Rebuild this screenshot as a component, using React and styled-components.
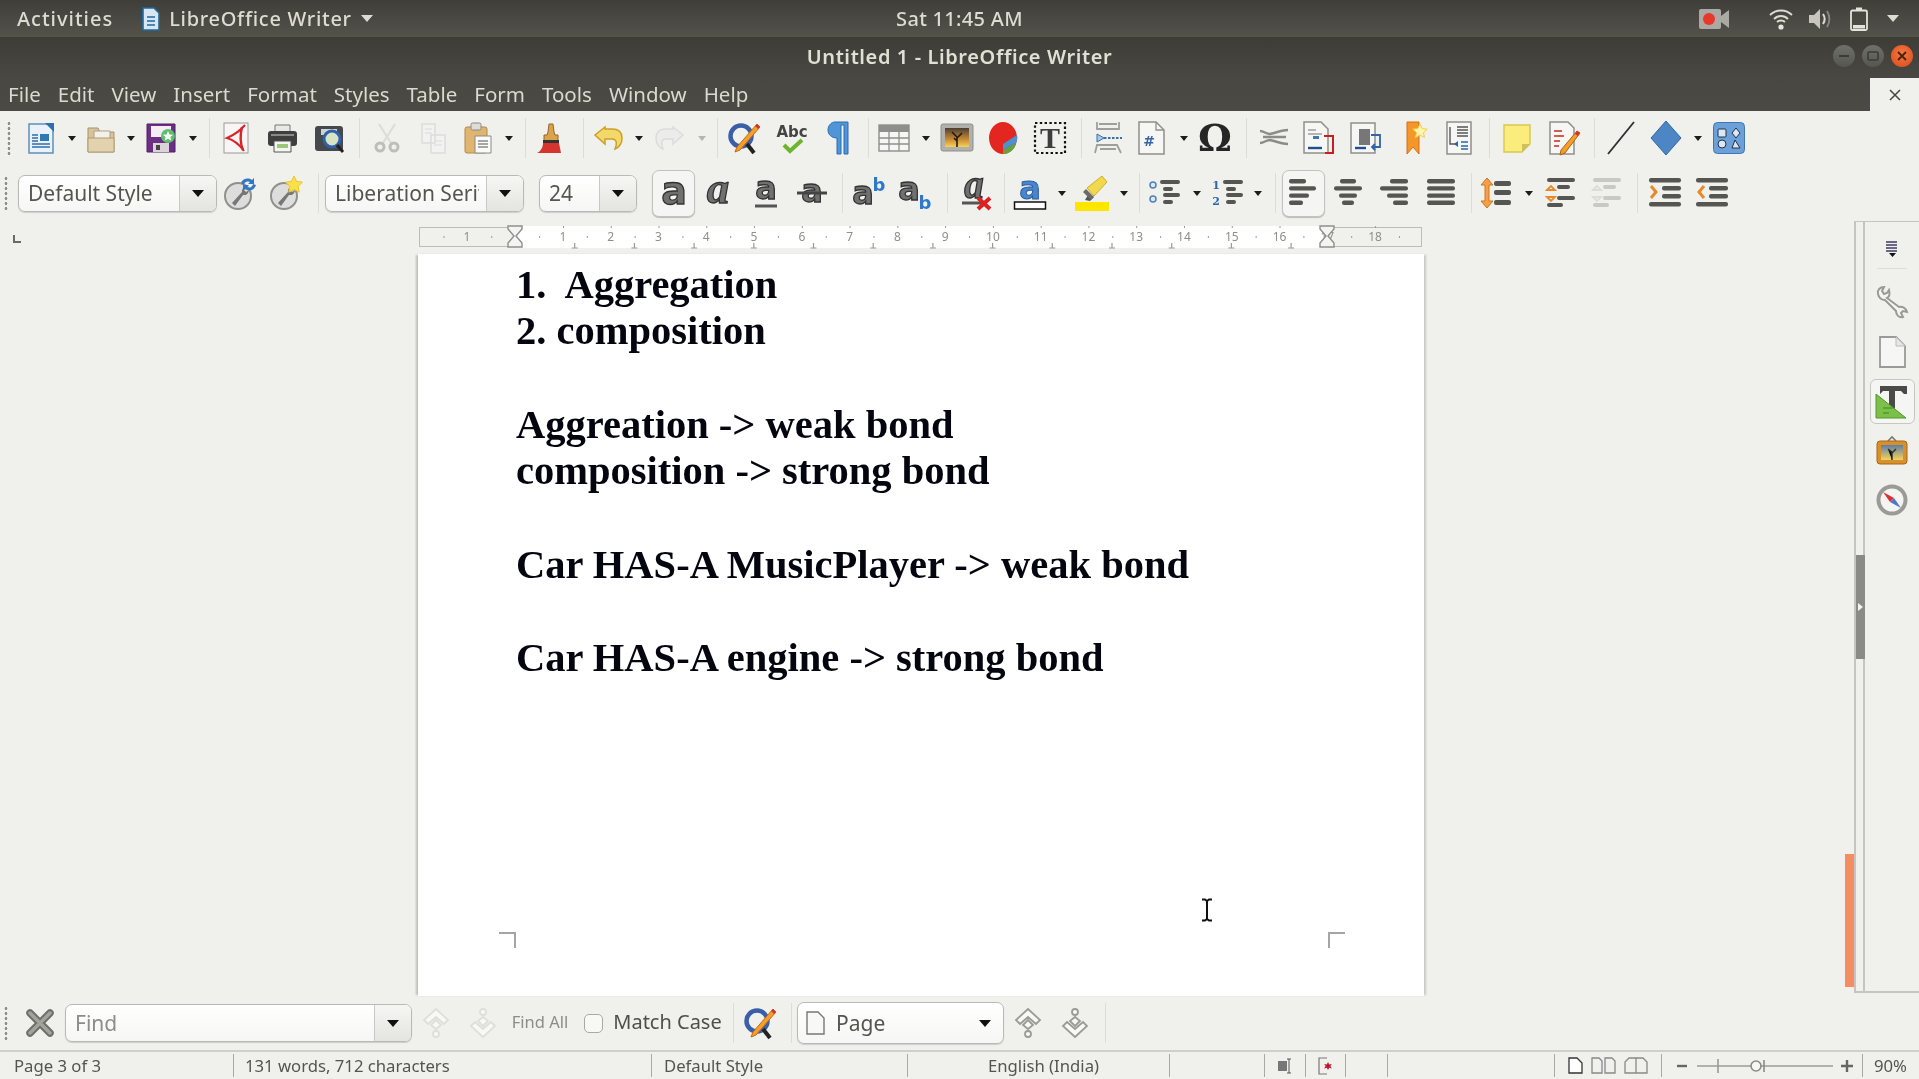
import React from 'react';
import styled, { createGlobalStyle } from 'styled-components';

const UI = `"Noto Sans", "Open Sans", sans-serif`;

const Global = createGlobalStyle`
  html, body { margin: 0; padding: 0; background: #f0f0ed; overflow: hidden; }
  * { box-sizing: border-box; }
`;

const Screen = styled.div`
  width: 1919px; height: 1079px; display: flex; flex-direction: column; overflow: hidden;
  background: #f0f0ed; font-family: ${UI}; filter: blur(0.45px);
`;
const TopBar = styled.header`
  height: 37px; flex: none; display: grid; grid-template-columns: 1fr auto 1fr; align-items: center;
  background: linear-gradient(#3f3e39, #53524b); color: #dedbd0; font-size: 20px; font-weight: 500;
`;
const TopLeft = styled.div`display: flex; align-items: center; padding-left: 17px;`;
const Activities = styled.span`letter-spacing: 1px;`;
const AppName = styled.div`display: flex; align-items: center; gap: 9px; margin-left: 29px; letter-spacing: .7px;`;
const Clock = styled.div`letter-spacing: .3px;`;
const TopRight = styled.div`display: flex; align-items: center; justify-content: flex-end; padding-right: 20px;`;
const TrayItem = styled.span`display: flex; margin-left: ${p => p.$ml}px;`;
const WhiteCaret = styled.span`
  display: block; width: 0; height: 0; border: 6px solid transparent; border-top: 7px solid ${p => p.$c || '#dedbd0'}; border-bottom: 0;
`;
const TitleBar = styled.div`
  height: 38px; flex: none; display: grid; grid-template-columns: 1fr auto 1fr; align-items: center;
  background: linear-gradient(#3d3c37, #484742); color: #e2dfd4; font-size: 20px; font-weight: 600; letter-spacing: .6px;
`;
const TitleText = styled.span`grid-column: 2;`;
const WinButtons = styled.div`grid-column: 3; display: flex; justify-content: flex-end; gap: 7px; padding-right: 6px;`;
const WinBtn = styled.span`
  width: 22px; height: 22px; border-radius: 50%; display: flex; align-items: center; justify-content: center;
  background: ${p => p.$close ? 'radial-gradient(circle at 50% 40%, #f47a3e, #d9481c)' : 'linear-gradient(#70706a, #565650)'};
`;
const MenuBar = styled.nav`
  height: 36px; flex: none; display: flex; align-items: center; padding: 2px 0 0 8px; gap: 17px;
  background: linear-gradient(#484742, #4c4a44); color: #dcd9ce; font-size: 20.5px; position: relative;
`;
const CloseTab = styled.div`
  position: absolute; right: 0; bottom: 0; width: 49px; height: 33px; background: #f0f0ed;
  display: flex; align-items: center; justify-content: center;
`;
const Bar = styled.div`
  height: ${p => p.$h}px; display: flex; align-items: center; flex: none; background: #f0f0ed; ${p => p.$line && 'border-bottom: 2px solid #cfcfcb;'}
`;
const Slot = styled.div`
  flex: none; display: flex; align-items: center; justify-content: center; height: ${p => p.$h || 34}px;
  width: ${p => p.$w}px; margin-left: ${p => p.$ml}px;
  ${p => p.$active && 'height: 47px; border: 1px solid #c2c2be; border-radius: 7px; background: #f5f5f3; box-shadow: 0 1px 1px #bbb;'}
`;
const Sep = styled.div`width: 1px; height: 40px; background: #dcdcd8;`;
const Grip = styled.div`
  width: 4px; height: 34px; background-image: radial-gradient(circle, #8f8f8b 1.3px, transparent 1.6px); background-size: 4px 5px;
`;
const Caret = styled.span`
  display: block; width: 0; height: 0; border: 4px solid transparent; border-top: 5px solid ${p => p.$off ? '#b5b5b2' : '#1c1c1c'}; border-bottom: 0;
`;
const ComboBox = styled.div`
  width: 100%; height: ${p => p.$h || 37}px; display: flex; border: 1px solid #b9b9b5; border-radius: 7px; overflow: hidden;
  box-shadow: 0 1px 1px #ccc; background: linear-gradient(#fff, #f6f6f4); color: #55554f; font-size: 21px;
`;
const ComboText = styled.div`
  flex: 1; min-width: 0; padding-left: ${p => p.$pad ?? 9}px; display: flex; align-items: center; gap: 11px; white-space: nowrap; overflow: hidden;
`;
const ComboClip = styled.span`display: block; overflow: hidden; margin-right: 7px;`;
const ComboBtn = styled.div`
  flex: none; width: ${p => p.$w}px; display: flex; align-items: center; justify-content: center;
  ${p => !p.$flat && 'border-left: 1px solid #c8c8c4; background: linear-gradient(#f6f6f4, #e4e4e0);'}
`;
const BigCaret = styled.span`
  display: block; width: 0; height: 0; border: 6px solid transparent; border-top: 7px solid #111; border-bottom: 0;
`;
const Main = styled.div`flex: 1; min-height: 0; display: flex;`;
const LeftCol = styled.div`width: 1854px; flex: none; display: flex; flex-direction: column;`;
const RulerRow = styled.div`height: 33px; flex: none; display: flex; align-items: flex-end; padding: 0 0 5px 13px;`;
const TabMark = styled.span`
  width: 8px; height: 8px; border-left: 2px solid #6a6a66; border-bottom: 2px solid #6a6a66; margin-bottom: 6px; margin-right: 398px;
`;
const DocRow = styled.div`flex: 1; min-height: 0; display: flex; padding-left: 418px;`;
const Sheet = styled.main`
  width: 1006px; position: relative; background: #fff; display: flex; flex-direction: column; padding-top: 7.5px;
  box-shadow: -3px 0 2px -1px #bdbdba, 3px 0 2px -1px #c8c8c5;
`;
const Line = styled.p`
  margin: 0 0 0 98px; height: 46.7px; line-height: 46.7px; white-space: pre;
  font-family: "Liberation Serif", serif; font-weight: 700; font-size: 40.5px; color: #050510;
`;
const CornerRow = styled.div`margin-top: auto; margin-bottom: 48px; padding: 0 79px 0 81px; display: flex; justify-content: space-between;`;
const Corner = styled.span`
  width: 17px; height: 16px; border-top: 2px solid #a5a5a3;
  ${p => p.$side === 'right' ? 'border-right: 2px solid #a5a5a3;' : 'border-left: 2px solid #a5a5a3;'}
`;
const IBeam = styled.svg`position: absolute; left: 783px; top: 644px;`;
const Track = styled.div`width: 10px; margin-left: auto; margin-right: -1px; display: flex; flex-direction: column; justify-content: flex-end; padding-bottom: 9px;`;
const Thumb = styled.div`height: 133px; background: #f48e5e;`;
const SideBar = styled.aside`
  width: 65px; height: 772px; flex: none; display: flex; border: 1px solid #c4c4c0; border-right: 0; border-left-width: 2px; position: relative; border-bottom-width: 2px;
`;
const SideHandle = styled.div`
  width: 9px; flex: none; border-right: 2px solid #c4c4c0; display: flex; align-items: center;
`;
const HandleGrip = styled.div`
  width: 9px; height: 104px; background: #8a8a87; display: flex; align-items: center; justify-content: center; flex: none;
`;
const HandleArrow = styled.span`
  display: block; width: 0; height: 0; border: 4px solid transparent; border-left: 5px solid #f4f4f2; border-right: 0;
`;
const SideIcons = styled.div`flex: 1; display: flex; flex-direction: column; align-items: center; padding-top: 18px;`;
const SideBtn = styled.div`
  width: 45px; height: 45px; margin-top: ${p => p.$mt}px; flex: none; display: flex; align-items: center; justify-content: center; border-radius: 6px;
  ${p => p.$active && 'border: 1px solid #c6c6c2; background: #f5f5f3;'}
`;
const SideRule = styled.div`width: 30px; height: 1px; background: #dcdcd8; margin-top: 10px;`;
const FindLabel = styled.span`
  font-size: ${p => p.$size || 20}px; color: ${p => p.$off ? '#8c8c88' : '#4f4f4a'}; white-space: nowrap; margin-top: ${p => p.$up ? -3 : 0}px;
`;
const CheckBox = styled.span`display: block; width: 19px; height: 19px; border: 1.5px solid #a8a8a4; border-radius: 5px; background: #f8f8f6;`;
const Status = styled.footer`
  height: 27px; flex: none; display: flex; align-items: center; color: #555550; font-size: 16.7px; background: #f0f0ed;
`;
const Cell = styled.div`
  height: 23px; width: ${p => p.$w}px; flex: none; display: flex; align-items: center; gap: ${p => p.$gap || 0}px;
  justify-content: ${p => p.$align || 'flex-start'}; padding-left: ${p => p.$pad ?? 0}px; white-space: nowrap;
  ${p => !p.$first && 'border-left: 1.5px solid #a9a9a5;'}
`;

const S = ({ children, w = 32, h = 32, vb }) => (
  <svg width={w} height={h} viewBox={vb || `0 0 ${w} ${h}`} fill="none" overflow="visible">{children}</svg>
);
const g = { tf: '"DejaVu Sans", sans-serif' };

const NewDoc = () => <S><path d="M4 2h19l5 5v24H4z" fill="#eaf1f8" stroke="#5e8fbe" strokeWidth="1.5"/><path d="M20 1h9v9z" fill="#2f6ea8"/><rect x="15" y="12" width="9" height="7" fill="#2f78b5"/><path d="M7 13h6M7 16h6M7 19h6M7 22h18M7 25h18" stroke="#2f6ea8" strokeWidth="1.6"/></S>;
const OpenIco = () => <S><path d="M3 6h10l2 4h14v20H3z" fill="#d8c39a" stroke="#a99368"/><path d="M9 9h16v9H9z" fill="#f4f1ea" stroke="#a8a090"/><path d="M3 16h26v14H3z" fill="#e3d2ae" stroke="#b09a70"/></S>;
const SaveIco = () => <S><path d="M2 2h28v28H2z" fill="#6d2f86" stroke="#4e2163"/><rect x="6" y="4" width="20" height="11" fill="#f2eef4"/><rect x="8" y="21" width="16" height="9" fill="#d8d4d8"/><rect x="11" y="23" width="4" height="5" fill="#444"/><circle cx="23" cy="14" r="7" fill="#5dc06a"/><path d="M23 9l1.5 3.4 3.5.4-2.6 2.3.8 3.4-3.2-1.8-3.2 1.8.8-3.4-2.6-2.3 3.5-.4z" fill="#fff"/></S>;
const PdfIco = () => <S><rect x="4" y="1" width="24" height="30" fill="#f7f6f4" stroke="#9a9a96"/><path d="M25 3C20 9 14 13 7 16c7 2 12 6 17 13" stroke="#d8232a" strokeWidth="2"/><path d="M22 5c-2 8-2 16 1 23" stroke="#d8232a" strokeWidth="2.4"/></S>;
const PrintIco = () => <S><path d="M9 3h15v7H9z" fill="#e8e8e6" stroke="#777"/><rect x="2" y="9" width="29" height="15" rx="3" fill="#3f3f3f"/><rect x="5" y="12" width="23" height="2" fill="#8a8a88"/><path d="M8 19h17v11H8z" fill="#f5f5f2" stroke="#555"/><rect x="11" y="22" width="11" height="4" fill="#9bc77a"/></S>;
const PreviewIco = () => <S><rect x="2" y="4" width="28" height="25" rx="3" fill="#45494d" /><rect x="8" y="7" width="16" height="6" fill="#cfd2d4"/><circle cx="19" cy="17" r="8" fill="#d6e3c4" stroke="#2f60a8" strokeWidth="3"/><path d="M24 23l6 7" stroke="#222" strokeWidth="3"/></S>;
const CutIco = () => <S><path d="M8 2l12 19M24 2L12 21" stroke="#dcdcda" strokeWidth="2.2"/><circle cx="9" cy="25" r="4" stroke="#bdbdbb" strokeWidth="3"/><circle cx="23" cy="25" r="4" stroke="#bdbdbb" strokeWidth="3"/></S>;
const CopyIco = () => <S><path d="M5 2h13v19H5zM14 13h14v18H14z" fill="#f2f2f0" stroke="#dcdcda" strokeWidth="1.5"/><path d="M8 7h7M8 11h7M17 19h8M17 23h8" stroke="#e2e2e0" strokeWidth="1.5"/></S>;
const PasteIco = () => <S><rect x="3" y="5" width="22" height="26" rx="2" fill="#e0b56f" stroke="#b08a4c"/><rect x="9" y="1" width="10" height="7" rx="1.5" fill="#dedcd8" stroke="#888"/><path d="M13 14h16v17H13z" fill="#fafaf8" stroke="#8a8a86"/><path d="M16 19h10M16 22h10M16 25h10" stroke="#8a8a86" strokeWidth="1.4"/></S>;
const BrushIco = () => <S><path d="M14 2h4l1 8 1 3h3v6H9v-6h3l1-3z" fill="#d9a24c" stroke="#94672a"/><rect x="8" y="18" width="16" height="3" fill="#333"/><path d="M8 21h16l2 10H2c4-2 6-6 6-10z" fill="#d6342e"/></S>;
const UndoIco = () => <S><path d="M12 5L2 13l10 9v-5h7c4 0 5 3 4 7l-1 3c5-2 7-6 7-11 0-6-4-9-10-9h-7z" fill="#f3d96c" stroke="#c9a02a" strokeWidth="1.5"/></S>;
const RedoIco = () => <S><g transform="translate(32 0) scale(-1 1)"><path d="M12 5L2 13l10 9v-5h7c4 0 5 3 4 7l-1 3c5-2 7-6 7-11 0-6-4-9-10-9h-7z" fill="#ececea" stroke="#dcdcda" strokeWidth="1.5"/></g></S>;
const FindIco = () => <S w={36} h={36}><circle cx="15" cy="16" r="10.5" stroke="#3a5fa8" strokeWidth="4.5"/><path d="M21 24l7 9" stroke="#222" strokeWidth="4"/><path d="M31 4l3 3L14 30l-5 2 2-5z" fill="#f2a028" stroke="#c4681a"/><path d="M31 4l3 3-2 2-3-3z" fill="#d6342e"/></S>;
const AbcIco = () => <S w={36} h={36}><text x="18" y="17" textAnchor="middle" fontFamily={g.tf} fontSize="15" fontWeight="700" fill="#444">Abc</text><path d="M10 25l6 6 12-11" stroke="#6cb52c" strokeWidth="4"/></S>;
const ParaIco = () => <S w={24} h={36}><path d="M8 2h13v32h-4V5h-3v29h-4V18C4 18 1 14 1 10s3-8 7-8z" fill="#4f95d8" stroke="#2a6cb0"/></S>;
const TableIco = () => <S><rect x="1" y="3" width="30" height="26" fill="#f6f6f4" stroke="#8e8e8a" strokeWidth="1.4"/><rect x="1" y="3" width="30" height="7" fill="#8e8e8a"/><path d="M1 16h30M1 22h30M11 10v19M21 10v19" stroke="#8e8e8a" strokeWidth="1.3"/></S>;
const ImageIco = () => <S w={34} h={34}><rect x="1" y="3" width="32" height="27" rx="2" fill="#b0b0ac" stroke="#8e8e8a"/><defs><linearGradient id="sky" x1="0" y1="0" x2="0" y2="1"><stop offset="0" stopColor="#4c3f33"/><stop offset=".6" stopColor="#c98a34"/><stop offset="1" stopColor="#f6d35a"/></linearGradient></defs><rect x="5" y="7" width="24" height="19" fill="url(#sky)"/><path d="M17 26V16l-5-5M17 17l5-5M17 20l-3-3" stroke="#231a12" strokeWidth="1.6"/></S>;
const ChartIco = () => <S w={32} h={36}><ellipse cx="16" cy="18" rx="14" ry="16" fill="#e3261f"/><path d="M16 30l13-7c-1 6-6 11-13 11z" fill="#62a53b"/><path d="M16 24l14-9c1 3 0 6-1 8l-13 7z" fill="#4d92d0"/></S>;
const TextBoxIco = () => <S w={34} h={36}><rect x="2" y="3" width="30" height="30" stroke="#111" strokeWidth="2.2" strokeDasharray="2.4 2.4"/><text x="17" y="28" textAnchor="middle" fontFamily='"Liberation Serif", serif' fontWeight="700" fontSize="30" fill="#3e3e3e">T</text></S>;
const BreakIco = () => <S w={36} h={36}><path d="M8 2v7h22V2M10 4h18" stroke="#9e9e9a" strokeWidth="1.8"/><path d="M8 14l0 8 7-4z" fill="#a9cbe8" stroke="#3a6ea8"/><path d="M15 18h18" stroke="#3a6ea8" strokeWidth="2" strokeDasharray="2.5 1.5"/><path d="M6 33l2-8h20l4 8M11 29h16" stroke="#9e9e9a" strokeWidth="1.8"/></S>;
const FieldIco = () => <S w={30} h={36}><path d="M3 2h17l8 8v24H3z" fill="#f6f6f4" stroke="#8e8e8a" strokeWidth="1.5"/><path d="M20 2v8h8" stroke="#8e8e8a" strokeWidth="1.3"/><text x="13" y="26" textAnchor="middle" fontFamily={g.tf} fontSize="14" fontWeight="700" fill="#37659f">#</text></S>;
const OmegaIco = () => <S w={34} h={36}><text x="17" y="31" textAnchor="middle" fontFamily='"DejaVu Serif", serif' fontSize="38" fontWeight="700" fill="#262626">Ω</text></S>;
const LinkIco = () => <S><path d="M2 9c4 0 6 3 10 3l4-1c3-1 9-3 14-3M2 21c4 0 6-3 10-3l4 1c3 1 9 3 14 3M5 15h23" stroke="#8b8b87" strokeWidth="2.4"/></S>;
const DocArrow = ({ c }) => <S w={34} h={36}><path d="M2 2h17l7 7v24H2z" fill="#f6f6f4" stroke="#8e8e8a" strokeWidth="1.5"/><path d="M6 10h8M6 14h14" stroke="#a0a0a0" strokeWidth="1.4"/><rect x="11" y="16" width="6" height="3" fill="#3a78b8"/><path d="M6 28h14" stroke="#1f4f8e" strokeWidth="2.4"/><path d="M22 16h9v17h-8" stroke={c} strokeWidth="2"/></S>;
const EndIco = () => <S w={34} h={34}><rect x="2" y="2" width="24" height="30" fill="#f6f6f4" stroke="#8e8e8a" strokeWidth="1.5"/><rect x="10" y="8" width="11" height="16" fill="#777"/><path d="M6 27h11" stroke="#1f4f8e" strokeWidth="2.4"/><path d="M22 14h9v12h-8M26 23l-3 3 3 3" stroke="#2f65a8" strokeWidth="1.8"/></S>;
const MarkIco = () => <S w={28} h={36}><path d="M5 2h12v32l-6-7-6 7z" fill="#f4962a" stroke="#d86f12"/><path d="M18 4l2.2 4.6 5 .6-3.7 3.4 1 5-4.500-2.500-4.500 2.500 1-5-3.700-3.400 5-.6z" fill="#fff4b0" stroke="#f4d040"/></S>;
const XrefIco = () => <S w={30} h={36}><rect x="3" y="2" width="24" height="32" fill="#f6f6f4" stroke="#8e8e8a" strokeWidth="1.5"/><path d="M13 7h11M13 10h11M13 13h11M13 16h11M6 7v17h6" stroke="#555" strokeWidth="1.4"/><path d="M10 24l4-3v6z" fill="#2f65a8"/><path d="M17 22h7M17 26h7M17 29h7" stroke="#2f65a8" strokeWidth="1.5"/></S>;
const NoteIco = () => <S><path d="M3 3h26v19l-8 8H3z" fill="#fbec7e" stroke="#d8c74f" strokeWidth="1.4"/><path d="M21 30v-8h8z" fill="#cfc05a"/></S>;
const TrackIco = () => <S w={36} h={36}><path d="M4 2h18l6 6v26H4z" fill="#f6f6f4" stroke="#8e8e8a" strokeWidth="1.5"/><path d="M8 11h8M8 16h10M8 21h6M8 26h5" stroke="#d65a50" strokeWidth="1.8"/><path d="M31 11l3 2-15 20-5 2 1-5z" fill="#f2a028" stroke="#a86020"/><path d="M31 11l3 2-2 3-3-2z" fill="#d6342e"/></S>;
const LineIco = () => <S w={28} h={34}><path d="M1 33L27 1" stroke="#2f2f2f" strokeWidth="1.8"/></S>;
const Diamond = () => <S w={32} h={36}><path d="M16 1l15 17-15 17L1 18z" fill="#4d86c5" stroke="#2d66a8"/></S>;
const ShapesIco = () => <S w={32} h={32}><rect x="0.5" y="0.5" width="31" height="31" rx="4" fill="#6d9fd8" stroke="#3e76b8"/><rect x="5" y="7" width="8" height="8" rx="1" fill="#dbe7f5" stroke="#234"/><path d="M23 6l4 5-4 5-4-5z" fill="#dbe7f5" stroke="#234"/><circle cx="9" cy="22" r="4" fill="#dbe7f5" stroke="#234"/><path d="M19 26l3-8 5 8z" fill="#dbe7f5" stroke="#234"/></S>;
const Wrench = () => <><circle cx="15" cy="21" r="13" fill="#ddd" stroke="#8f8f8b" strokeWidth="2"/><path d="M9 28l10-11a4 4 0 0 1 4-5l-2 3 2 2 3-2a5 5 0 0 1-6 5L12 31z" fill="#777"/></>;
const Style1 = () => <S w={36} h={36}><Wrench /><path d="M18 8a7 7 0 0 1 11-3l2-2v6h-6l2-2a4 4 0 0 0-6 3zM33 10a7 7 0 0 1-11 4l-2 2v-6h6l-2 2a4 4 0 0 0 6-3z" fill="#2f78c8"/></S>;
const Style2 = () => <S w={36} h={36}><Wrench /><path d="M25 1l2.600 5.400 5.900.8-4.300 4.100 1 5.900-5.200-2.800-5.200 2.800 1-5.900-4.300-4.100 5.900-.8z" fill="#fbe04a" stroke="#e8c82c"/></S>;

const Letter = ({ ch = 'a', children, italic, x = 15, y = 26, size = 30, w = 32, h = 34 }) => (
  <S w={w} h={h}>
    <text x={x} y={y} textAnchor="middle" fontFamily={italic ? '"Liberation Serif", serif' : g.tf} fontSize={italic ? size * 1.5 : size} fontWeight="700" fontStyle={italic ? 'italic' : 'normal'} fill="#707070" stroke="#333" strokeWidth="1.3">{ch}</text>
    {children}
  </S>
);
const BoldIco = () => <Letter size={38} y={28} x={16} />;
const ItalicIco = () => <Letter italic y={27} x={14} />;
const UnderIco = () => <Letter y={23} size={32}><path d="M4 30h22" stroke="#555" strokeWidth="3"/></Letter>;
const StrikeIco = () => <Letter y={26} size={32} w={34} x={17}><path d="M2 17h30" stroke="#444" strokeWidth="3"/></Letter>;
const SupIco = () => <Letter x={11} y={28} w={34} size={32}><text x="27" y="15" textAnchor="middle" fontFamily={g.tf} fontSize="18" fontWeight="700" fill="#2f78c8">b</text></Letter>;
const SubIco = () => <Letter x={11} y={24} w={34} size={32}><text x="27" y="33" textAnchor="middle" fontFamily={g.tf} fontSize="18" fontWeight="700" fill="#2f78c8">b</text></Letter>;
const ClearIco = () => <Letter italic y={23} size={26} w={34} h={36} x={14}><path d="M2 28h20" stroke="#555" strokeWidth="3"/><path d="M18 23l12 11M30 23L18 34" stroke="#e02020" strokeWidth="4"/></Letter>;
const ColorIco = () => <S w={34} h={36}><text x="17" y="24" textAnchor="middle" fontFamily={g.tf} fontSize="32" fontWeight="700" fill="#4a86cc" stroke="#2a5ea8">a</text><rect x="1.5" y="27" width="31" height="7" fill="#fff" stroke="#111" strokeWidth="1.5"/></S>;
const HighIco = () => <S w={36} h={36}><path d="M14 20l-3 5 5 1 4-4z" fill="#555"/><path d="M13 13l7 8 13-14-5-6z" fill="#f2d84c" stroke="#cfae2a"/><path d="M12 14l8 8-3 3-8-8z" fill="#6a6a66"/><rect x="1" y="27" width="34" height="9" fill="#ffe600"/></S>;

const bar = '#555551';
const Bars = ({ rows }) => (
  <svg width="30" height="30" viewBox="0 0 30 30">
    {rows.map(([x, w], i) => <rect key={i} x={x} y={1 + i * 7.2} width={w} height="4.4" rx="2" fill={bar} />)}
  </svg>
);
const ListIco = ({ num }) => (
  <S w={32} h={30}>
    {num ? <>
      <text x="5" y="11" textAnchor="middle" fontFamily='"DejaVu Serif", serif' fontSize="11" fontWeight="700" fill="#2f65a8">1</text>
      <text x="5" y="27" textAnchor="middle" fontFamily='"DejaVu Serif", serif' fontSize="11" fontWeight="700" fill="#2f65a8">2</text>
    </> : <>
      <circle cx="5" cy="7" r="3" fill="#dfe8f2" stroke="#4d82c0" strokeWidth="1.5"/>
      <circle cx="5" cy="21" r="3" fill="#dfe8f2" stroke="#4d82c0" strokeWidth="1.5"/>
    </>}
    {[[12, 20, 2], [15, 10, 9], [15, 17, 15], [15, 10, 22]].map(([x, w, y], i) => <rect key={i} x={x} y={y} width={w} height="4" rx="2" fill={bar} />)}
  </S>
);
const SpaceIco = () => <S w={34} h={34}><path d="M8 2l6 7h-4v16h4l-6 7-6-7h4V9H2z" fill="#f4a04a" stroke="#d07618"/><rect x="15" y="5" width="17" height="5" rx="2" fill={bar}/><rect x="15" y="14" width="17" height="5" rx="2" fill={bar}/><rect x="15" y="24" width="17" height="5" rx="2" fill={bar}/></S>;
const ParaUp = ({ off }) => {
  const c = off ? '#c8c8c5' : bar; const o = off ? '#dcdcd8' : '#e88a26';
  return <S w={30} h={34}><rect x="1" y="2" width="28" height="4" rx="2" fill={c}/><rect x="11" y="9" width="13" height="4" rx="2" fill={c}/><path d="M1 14l4-4 4 4zM1 21l4 4 4-4z" fill="none" stroke={o} strokeWidth="1.8"/><rect x="11" y="20" width="18" height="4" rx="2" fill={c}/><rect x="1" y="27" width="16" height="4" rx="2" fill={c}/></S>;
};
const IndentIco = ({ out }) => <S w={34} h={34}>{[[1, 32, 2], [14, 19, 10], [14, 19, 18], [1, 32, 26]].map(([x, w, y], i) => <rect key={i} x={x} y={y} width={w} height="4.4" rx="2" fill={bar}/>)}<path d={out ? 'M9 10l-5 6 5 6' : 'M3 10l5 6-5 6'} stroke="#e88a26" strokeWidth="3" fill="none"/></S>;

const CloseX = () => <svg width="36" height="36" viewBox="0 0 36 36"><path d="M8 8l20 20M28 8L8 28" stroke="#6f6f6a" strokeWidth="7.5" strokeLinecap="round"/><path d="M8 8l20 20M28 8L8 28" stroke="#a3a39e" strokeWidth="3.5" strokeLinecap="round"/></svg>;
const NavIco = ({ down, off }) => {
  const c = off ? '#dededb' : '#9a9a96';
  return <S w={30} h={34}><g transform={down ? 'translate(0 34) scale(1 -1)' : ''} stroke={c} strokeWidth="1.8" fill="#f8f8f6"><path d="M15 3l12 11-4 4-8-7-8 7-4-4z"/><path d="M15 14l5 5-5 4-5-4z"/><circle cx="15" cy="28" r="3"/></g></S>;
};

const at = (c, w, el, extra = {}) => ({ c, w, el, ...extra });
const sep = c => at(c, 1, <Sep />, { h: 40 });
const arr = (c, off) => at(c, 8, <Caret $off={off} />, { h: 8 });

const Row = ({ items }) => {
  let edge = 0;
  return items.map((it, i) => {
    const left = it.c - it.w / 2;
    const ml = left - edge;
    edge = left + it.w;
    return <Slot key={i} $w={it.w} $ml={ml} $h={it.h} $active={it.active}>{it.el}</Slot>;
  });
};

const Combo = ({ text, btn, pad, h }) => (
  <ComboBox $h={h}><ComboText $pad={pad}><ComboClip>{text}</ComboClip></ComboText><ComboBtn $w={btn}><BigCaret /></ComboBtn></ComboBox>
);

const row1 = [
  at(9, 4, <Grip />), at(41, 32, <NewDoc />), arr(72), at(101, 32, <OpenIco />), arr(131), at(161, 32, <SaveIco />), arr(193), sep(209),
  at(236, 32, <PdfIco />), at(282, 32, <PrintIco />), at(329, 32, <PreviewIco />), sep(359),
  at(387, 32, <CutIco />), at(433, 32, <CopyIco />), at(478, 32, <PasteIco />), arr(509), sep(525), at(551, 32, <BrushIco />), sep(583),
  at(609, 32, <UndoIco />), arr(639), at(669, 32, <RedoIco />), arr(702, true), sep(717),
  at(744, 36, <FindIco />), at(792, 36, <AbcIco />), at(839, 24, <ParaIco />), sep(868),
  at(894, 32, <TableIco />), arr(926), at(957, 34, <ImageIco />), at(1003, 32, <ChartIco />), at(1050, 34, <TextBoxIco />), sep(1081),
  at(1107, 36, <BreakIco />), at(1151, 30, <FieldIco />), arr(1184), at(1215, 34, <OmegaIco />), sep(1246),
  at(1274, 32, <LinkIco />), at(1319, 34, <DocArrow c="#c81e1e" />), at(1366, 34, <EndIco />), at(1416, 28, <MarkIco />), at(1459, 30, <XrefIco />), sep(1489),
  at(1517, 32, <NoteIco />), at(1564, 36, <TrackIco />), sep(1594), at(1621, 28, <LineIco />), at(1666, 32, <Diamond />), arr(1698), at(1729, 32, <ShapesIco />),
];
const row2 = [
  at(6, 4, <Grip />),
  at(117.5, 199, <Combo text="Default Style" btn={37} />, { h: 37 }),
  at(241, 36, <Style1 />), at(287, 36, <Style2 />), sep(318),
  at(424.5, 199, <Combo text="Liberation Serif" btn={37} />, { h: 37 }),
  at(588, 98, <Combo text="24" btn={37} />, { h: 37 }),
  at(673.5, 43, <BoldIco />, { active: true, h: 47 }), at(720, 32, <ItalicIco />), at(767, 32, <UnderIco />), at(812, 34, <StrikeIco />), sep(842),
  at(869, 34, <SupIco />), at(915, 34, <SubIco />), sep(947), at(977, 34, <ClearIco />), sep(1004),
  at(1030, 34, <ColorIco />), arr(1062), at(1092, 36, <HighIco />), arr(1124), sep(1139),
  at(1164, 32, <ListIco />), arr(1197), at(1227, 32, <ListIco num />), arr(1258), sep(1275),
  at(1303, 43, <Bars rows={[[1, 17], [1, 27], [1, 20], [1, 14]]} />, { active: true, h: 47 }),
  at(1348, 30, <Bars rows={[[7, 16], [1, 28], [6, 18], [9, 12]]} />),
  at(1394, 30, <Bars rows={[[11, 18], [1, 28], [8, 21], [14, 15]]} />),
  at(1441, 30, <Bars rows={[[1, 28], [1, 28], [1, 28], [1, 28]]} />), sep(1471),
  at(1496, 34, <SpaceIco />), arr(1529), at(1561, 30, <ParaUp />), at(1607, 30, <ParaUp off />), sep(1637),
  at(1665, 34, <IndentIco />), at(1712, 34, <IndentIco out />),
];
const findRow = [
  at(6, 4, <Grip />), at(40, 36, <CloseX />),
  at(238.5, 347, <ComboBox $h={38}><ComboText><FindLabel $off $size={21}>Find</FindLabel></ComboText><ComboBtn $w={37}><BigCaret /></ComboBtn></ComboBox>, { h: 38 }),
  at(436, 30, <NavIco off />), at(483, 30, <NavIco down off />),
  at(540, 58, <FindLabel $off $up $size={16.5}>Find All</FindLabel>), at(593.5, 19, <CheckBox />),
  at(667.5, 110, <FindLabel $up>Match Case</FindLabel>), sep(733), at(760, 36, <FindIco />), sep(791),
  at(900.5, 207, <ComboBox $h={42}><ComboText $pad={8}>
    <svg width="19" height="24" viewBox="0 0 19 24"><path d="M1 1h11l6 6v16H1z" fill="#f8f8f6" stroke="#777" strokeWidth="1.4"/></svg>
    Page
  </ComboText><ComboBtn $flat $w={36}><BigCaret /></ComboBtn></ComboBox>, { h: 42 }),
  at(1028, 30, <NavIco />), at(1075, 30, <NavIco down />), sep(1105),
];

const Ruler = () => {
  const x = k => 96.2 + 47.77 * k;
  const nums = Array.from({ length: 18 }, (_, i) => i + 1);
  const Hour = ({ cx }) => <path d={`M${cx - 7} 1h14v3l-6 7 6 7v4h-14v-4l6-7-6-7z`} fill="#f4f4f2" stroke="#8e8e8a" strokeWidth="1.4"/>;
  return (
    <svg width="1006" height="24" viewBox="0 0 1006 24">
      <rect x="0.5" y="2.5" width="1002" height="19" fill="#f0f0ed" stroke="#bcbcb8"/>
      <rect x="96" y="1" width="812" height="22" fill="#fff"/>
      <g fontFamily={UI} fontSize="12" fill="#8e8e8a" textAnchor="middle">
        <text x="48" y="16">1</text>
        {nums.map(k => <text key={k} x={x(k)} y="16">{k}</text>)}
      </g>
      <g fill="#9a9a96">
        {[-1.5, -0.5, ...nums.map(k => k - 0.5), 18.5].map(k => <rect key={k} x={x(k)} y="11" width="1" height="2"/>)}
        {nums.map(k => <rect key={k} x={x(k)} y="1" width="1" height="2"/>)}
      </g>
      <g stroke="#9a9a96" strokeWidth="1.2">
        {Array.from({ length: 13 }, (_, i) => i + 1).map(k => <path key={k} d={`M${96 + 59.7 * k} 18v5M${93 + 59.7 * k} 23h6`}/>)}
      </g>
      <Hour cx={96} /><Hour cx={908} />
    </svg>
  );
};

const lines = ['1.  Aggregation', '2. composition', ' ', 'Aggreation -> weak bond', 'composition -> strong bond', ' ', 'Car HAS-A MusicPlayer -> weak bond', ' ', 'Car HAS-A engine -> strong bond'];

export default function App() {
  return (
    <Screen>
      <Global />
      <TopBar>
        <TopLeft>
          <Activities>Activities</Activities>
          <AppName>
            <svg width="18" height="24" viewBox="0 0 18 24"><path d="M1 1h11l5 5v17H1z" fill="#d8e6f4" stroke="#1f6a9c" strokeWidth="1.6"/><path d="M5 10h8M5 14h8M5 18h8" stroke="#1f6a9c" strokeWidth="1.6"/></svg>
            LibreOffice Writer
            <WhiteCaret />
          </AppName>
        </TopLeft>
        <Clock>Sat 11:45 AM</Clock>
        <TopRight>
          <TrayItem>
            <svg width="30" height="22" viewBox="0 0 30 22"><rect x="0" y="1" width="22" height="20" rx="2" fill="#aaa9a4"/><path d="M22 8l8-6v18l-8-6z" fill="#aaa9a4"/><circle cx="10" cy="11" r="6" fill="#e8382c"/></svg>
          </TrayItem>
          <TrayItem $ml={40}>
            <svg width="24" height="22" viewBox="0 0 24 22" fill="none"><path d="M1 7c6-6 16-6 22 0M5 11c4-4 10-4 14 0" stroke="#dedbd0" strokeWidth="1.8"/><path d="M8 14c2-2 6-2 8 0" stroke="#dedbd0" strokeWidth="1.8"/><circle cx="12" cy="19" r="2.6" fill="#e8e6dc"/></svg>
          </TrayItem>
          <TrayItem $ml={15}>
            <svg width="24" height="22" viewBox="0 0 24 22" fill="none"><path d="M1 7h5l6-6v20l-6-6H1z" fill="#c8c6bc"/><path d="M15 6c2 3 2 7 0 10" stroke="#dedbd0" strokeWidth="2"/><path d="M19 3c3 5 3 11 0 16" stroke="#8a8983" strokeWidth="1.8"/></svg>
          </TrayItem>
          <TrayItem $ml={18}>
            <svg width="18" height="24" viewBox="0 0 18 24" fill="none"><rect x="1" y="3.5" width="16" height="19.5" rx="1.5" stroke="#e6e4da" strokeWidth="1.8"/><rect x="6" y="0.5" width="6" height="3" fill="#e6e4da"/><rect x="3" y="18" width="12" height="3.5" fill="#e6e4da"/></svg>
          </TrayItem>
          <TrayItem $ml={19}><WhiteCaret /></TrayItem>
        </TopRight>
      </TopBar>
      <TitleBar>
        <TitleText>Untitled 1 - LibreOffice Writer</TitleText>
        <WinButtons>
          <WinBtn><svg width="12" height="12" viewBox="0 0 12 12"><rect x="1" y="5" width="10" height="2" fill="#3c3b36"/></svg></WinBtn>
          <WinBtn><svg width="12" height="12" viewBox="0 0 12 12" fill="none"><rect x="1" y="2" width="10" height="8" rx="1" stroke="#3c3b36" strokeWidth="1.6"/></svg></WinBtn>
          <WinBtn $close><svg width="12" height="12" viewBox="0 0 12 12"><path d="M2 2l8 8M10 2l-8 8" stroke="#4a2010" strokeWidth="1.8"/></svg></WinBtn>
        </WinButtons>
      </TitleBar>
      <MenuBar>
        {['File', 'Edit', 'View', 'Insert', 'Format', 'Styles', 'Table', 'Form', 'Tools', 'Window', 'Help'].map(m => <span key={m}>{m}</span>)}
        <CloseTab><svg width="12" height="12" viewBox="0 0 12 12"><path d="M1 1l10 10M11 1L1 11" stroke="#444" strokeWidth="1.5"/></svg></CloseTab>
      </MenuBar>
      <Bar $h={54}><Row items={row1} /></Bar>
      <Bar $h={56}><Row items={row2} /></Bar>
      <Main>
        <LeftCol>
          <RulerRow><TabMark /><Ruler /></RulerRow>
          <DocRow>
            <Sheet>
              {lines.map((l, i) => <Line key={i}>{l}</Line>)}
              <CornerRow><Corner $side="right" /><Corner $side="left" /></CornerRow>
              <IBeam width="12" height="24" viewBox="0 0 12 24" fill="none"><path d="M1 1.5h3l2 1.5 2-1.5h3M1 22.5h3l2-1.5 2 1.5h3M6 3v18" stroke="#111" strokeWidth="2"/></IBeam>
            </Sheet>
            <Track><Thumb /></Track>
          </DocRow>
        </LeftCol>
        <SideBar>
          <SideHandle><HandleGrip><HandleArrow /></HandleGrip></SideHandle>
          <SideIcons>
            <svg width="16" height="18" viewBox="0 0 16 18"><path d="M2 2h11M2 5h11M2 8h11M2 11h11" stroke="#3c3c66" strokeWidth="1.4"/><path d="M5 13h7l-3.500 4z" fill="#111"/></svg>
            <SideRule />
            <SideBtn $mt={10}><svg width="34" height="34" viewBox="0 0 34 34" fill="none"><path d="M3 9C2 5 5 2 9 2L7 6l2 3 3-1 2-3c1 4 0 7-2 8l12 9c3-1 7 1 8 5l-4-1-2 2 2 4c-4 1-7-2-7-6L10 15c-4 0-6-2-7-6z" fill="#f4f4f2" stroke="#999995" strokeWidth="2"/></svg></SideBtn>
            <SideBtn $mt={5}><svg width="28" height="32" viewBox="0 0 28 32"><path d="M2 1h16l9 9v21H2z" fill="#f6f6f4" stroke="#9a9a96" strokeWidth="1.8"/><path d="M18 1v9h9" fill="#e6e6e4" stroke="#bbb"/></svg></SideBtn>
            <SideBtn $mt={5} $active><svg width="34" height="36" viewBox="0 0 34 36"><path d="M5 2h27v8h-3l-3-3h-6v20h-6V7H8l-3 3z" fill="#4a4a48"/><path d="M1 10l30 24H1z" fill="#7cc04a" stroke="#4d9a2c"/><path d="M8 24h10M8 29h6" stroke="#4d9a2c" strokeWidth="1.5"/></svg></SideBtn>
            <SideBtn $mt={3}><svg width="34" height="30" viewBox="0 0 34 30"><path d="M13 6l4-4 4 4" stroke="#777" strokeWidth="1.6" fill="none"/><rect x="2" y="6" width="30" height="23" rx="3" fill="#d8902a" stroke="#a8661a"/><defs><linearGradient id="sky2" x1="0" y1="0" x2="0" y2="1"><stop offset="0" stopColor="#5d7ea8"/><stop offset="1" stopColor="#f6d35a"/></linearGradient></defs><rect x="6" y="10" width="22" height="15" fill="url(#sky2)"/><path d="M17 25v-8l-4-3M17 18l4-4" stroke="#332" strokeWidth="1.5"/></svg></SideBtn>
            <SideBtn $mt={5}><svg width="32" height="32" viewBox="0 0 32 32"><circle cx="16" cy="16" r="13.500" fill="#f4f4f2" stroke="#9a9a96" strokeWidth="4"/><path d="M7 8l11 6-4 4z" fill="#e03030"/><path d="M25 24l-11-6 4-4z" fill="#5078c8"/></svg></SideBtn>
          </SideIcons>
        </SideBar>
      </Main>
      <Bar $h={56} $line><Row items={findRow} /></Bar>
      <Status>
        <Cell $first $w={233} $pad={14}>Page 3 of 3</Cell>
        <Cell $w={418} $pad={11}>131 words, 712 characters</Cell>
        <Cell $w={256} $pad={12}>Default Style</Cell>
        <Cell $w={262} $pad={80}>English (India)</Cell>
        <Cell $w={95} />
        <Cell $w={41} $align="center"><svg width="14" height="16" viewBox="0 0 14 16"><rect x="0" y="3" width="9" height="10" fill="#777"/><path d="M9 1h4M9 15h4M11 1v14" stroke="#555" strokeWidth="1"/></svg></Cell>
        <Cell $w={40} $align="center"><svg width="16" height="18" viewBox="0 0 16 18"><path d="M9 1H1v16h8" fill="none" stroke="#777" strokeWidth="1.2"/><path d="M10 5l1.200 2.500 2.600-.6-1.400 2.200 1.400 2.300-2.600-.6L10 13l-1.200-2.200-2.600.6 1.400-2.300-1.400-2.200 2.600.6z" fill="#c01830"/></svg></Cell>
        <Cell $w={42} />
        <Cell $w={167} />
        <Cell $w={107} $gap={8} $align="center">
          <svg width="15" height="17" viewBox="0 0 15 17"><path d="M1 1h8l5 5v10H1z" fill="#fff" stroke="#333" strokeWidth="1.3"/></svg>
          <svg width="25" height="17" viewBox="0 0 25 17" fill="none" stroke="#888" strokeWidth="1.3"><path d="M1 1h7l3 3v12H1zM14 1h7l3 3v12H14z"/></svg>
          <svg width="24" height="17" viewBox="0 0 24 17" fill="none" stroke="#888" strokeWidth="1.3"><path d="M1 16V5l4-4h7v15zM12 1h7l4 4v11H12z"/></svg>
        </Cell>
        <Cell $w={201} $pad={14}>
          <svg width="186" height="20" viewBox="0 0 186 20" fill="none"><path d="M1 10h10" stroke="#666" strokeWidth="2.4"/><path d="M21 10h136M42 3v14" stroke="#9a9a96" strokeWidth="1.6"/><path d="M88 4v12" stroke="#8a8a86" strokeWidth="1.6"/><circle cx="80" cy="10" r="5" fill="#f6f6f4" stroke="#8a8a86" strokeWidth="1.6"/><path d="M165 10h12M171 4v12" stroke="#666" strokeWidth="2.4"/></svg>
        </Cell>
        <Cell $w={57} $pad={11}>90%</Cell>
      </Status>
    </Screen>
  );
}
